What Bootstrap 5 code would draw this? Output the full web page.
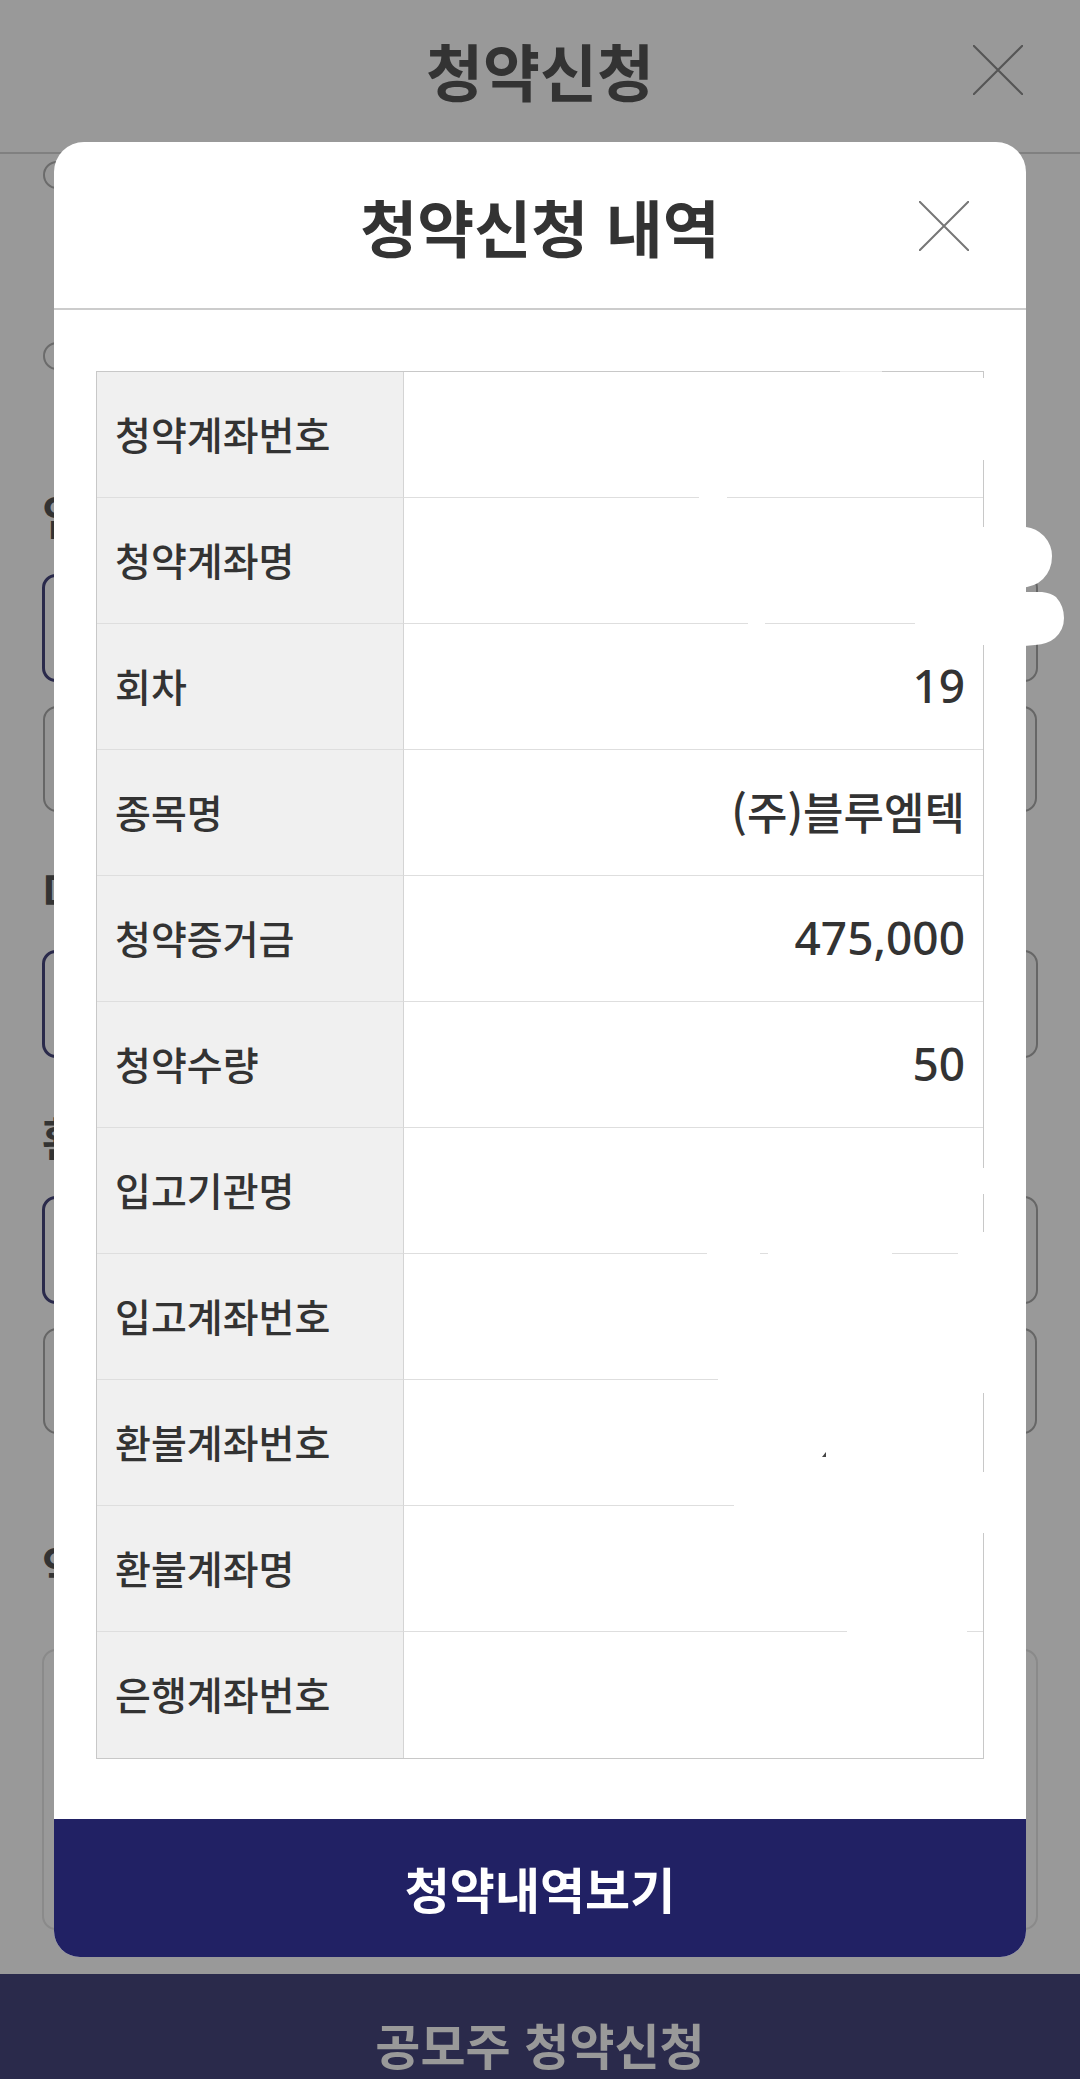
<!DOCTYPE html>
<html lang="ko">
<head>
<meta charset="utf-8">
<meta name="viewport" content="width=device-width, initial-scale=1">
<title>청약신청</title>
<link href="https://cdn.jsdelivr.net/npm/bootstrap@5.3.0/dist/css/bootstrap.min.css" rel="stylesheet">
<style>
  body { font-family: "Noto Sans CJK KR", sans-serif; color: #333; background: #999; }
  .page-shell { min-height: 100vh; }
  .top-bar { height: 154px; border-bottom: 2px solid #808080; padding-bottom: 12px; }
  .bar-title { font-size: 62px; line-height: 88px; font-weight: 700; }
  .close-x { right: 57px; width: 50px; height: 50px; }
  .close-x svg { display: block; width: 50px; height: 50px; stroke: #555; stroke-width: 2; fill: none; }
  .page-form { padding: 7px 42px 0; }
  .pick { appearance: none; display: block; width: 28px; height: 28px; margin: 0 0 153px 1px; border: 2px solid #6b6b6b; border-radius: 50%; }
  .pick-last { margin-bottom: 114px; }
  .group-title { font-size: 46px; line-height: 60px; font-weight: 700; margin: 0 0 30px; }
  .field-block { margin-bottom: 48px; }
  .field { background: #959595; border: 2px solid #666; border-radius: 14px; height: 108px; min-width: 0; }
  .field-on { background: #999; border: 3px solid #2a2a4b; }
  .field-wide { height: 106px; margin: 24px 1px 0; width: calc(100% - 2px); }
  .terms-block { margin-top: 100px; }
  .terms-box { height: 281px; margin-top: 55px; margin-bottom: 44px; border: 2px solid #8a8a8a; border-radius: 14px; background: transparent; resize: none; }
  .wide-btn { border: 0; font-size: 49px; line-height: 70px; font-weight: 700; }
  .apply-btn { background: #2a2a4b; color: #999; padding: 35px 0 0; }
  .sheet { top: 142px; left: 5%; right: 5%; background: #fff; border-radius: 30px 30px 26px 26px; }
  .sheet-head { height: 168px; border-bottom: 2px solid #ccc; padding-top: 2px; }
  .sheet-head svg { stroke: #777; }
  .sheet-body { padding: 61px 42px 60px; }
  .detail { border: 1px solid #c8c8c8; table-layout: fixed; border-collapse: separate; border-spacing: 0; }
  .detail th, .detail td { height: 126px; padding: 0 18px 4px; vertical-align: middle; border-bottom: 1px solid #dedede; }
  .detail tr:last-child > * { border-bottom: 0; }
  .detail th { width: 307px; font-size: 39px; line-height: 56px; font-weight: 500; background: #f0f0f0; border-right: 1px solid #d4d4d4; }
  .detail td { font-size: 44px; line-height: 60px; font-weight: 500; text-align: right; }
  .detail .figure-text { font-family: "Noto Sans", "Noto Sans CJK KR", sans-serif; font-size: 46px; }
  .view-btn { background: #212164; color: #fff; padding: 34px 0; border-radius: 0 0 26px 26px; }
  .marker { top: 0; left: 0; width: 1010px; height: 1815px; pointer-events: none; }
</style>
</head>
<body>
<div class="page-shell position-relative vh-100 overflow-hidden d-flex flex-column">
  <header class="top-bar position-relative d-flex align-items-center justify-content-center flex-shrink-0">
    <h1 class="bar-title m-0">청약신청</h1>
    <button type="button" class="close-x btn p-0 border-0 position-absolute" aria-labelledby="x1"><svg id="x1" viewBox="0 0 50 50"><path d="M0 0L50 50M50 0L0 50"/></svg></button>
  </header>
  <form class="page-form flex-shrink-0">
    <input class="pick" type="radio" name="kind" aria-labelledby="g1">
    <input class="pick pick-last" type="radio" name="kind" aria-labelledby="g1">
    <div class="field-block">
      <h2 class="group-title" id="g1">입</h2>
      <div class="d-flex gap-4">
        <input class="field field-on flex-fill" type="text" aria-labelledby="g1">
        <input class="field flex-fill" type="text" aria-labelledby="g1">
      </div>
      <input class="field field-wide d-block" type="text" aria-labelledby="g1">
    </div>
    <div class="field-block">
      <h2 class="group-title" id="g2">미</h2>
      <div class="d-flex gap-4">
        <input class="field field-on flex-fill" type="text" aria-labelledby="g2">
        <input class="field flex-fill" type="text" aria-labelledby="g2">
      </div>
    </div>
    <div>
      <h2 class="group-title" id="g3">환</h2>
      <div class="d-flex gap-4">
        <input class="field field-on flex-fill" type="text" aria-labelledby="g3">
        <input class="field flex-fill" type="text" aria-labelledby="g3">
      </div>
      <input class="field field-wide d-block" type="text" aria-labelledby="g3">
    </div>
    <div class="terms-block">
      <h2 class="group-title m-0" id="g4">약</h2>
      <textarea class="terms-box d-block w-100" aria-labelledby="g4"></textarea>
    </div>
  </form>
  <button type="button" class="wide-btn apply-btn w-100 flex-fill">공모주 청약신청</button>

  <section class="sheet position-absolute" role="dialog" aria-labelledby="sheetTitle">
    <div class="sheet-head position-relative d-flex align-items-center justify-content-center">
      <h2 class="bar-title m-0" id="sheetTitle">청약신청 내역</h2>
      <button type="button" class="close-x btn p-0 border-0 position-absolute" aria-labelledby="x2"><svg id="x2" viewBox="0 0 50 50"><path d="M0 0L50 50M50 0L0 50"/></svg></button>
    </div>
    <div class="sheet-body">
      <table class="detail w-100">
        <tbody>
          <tr><th scope="row">청약계좌번호</th><td></td></tr>
          <tr><th scope="row">청약계좌명</th><td></td></tr>
          <tr><th scope="row">회차</th><td class="figure-text">19</td></tr>
          <tr><th scope="row">종목명</th><td>(주)블루엠텍</td></tr>
          <tr><th scope="row">청약증거금</th><td class="figure-text">475,000</td></tr>
          <tr><th scope="row">청약수량</th><td class="figure-text">50</td></tr>
          <tr><th scope="row">입고기관명</th><td></td></tr>
          <tr><th scope="row">입고계좌번호</th><td></td></tr>
          <tr><th scope="row">환불계좌번호</th><td></td></tr>
          <tr><th scope="row">환불계좌명</th><td></td></tr>
          <tr><th scope="row">은행계좌번호</th><td></td></tr>
        </tbody>
      </table>
    </div>
    <button type="button" class="wide-btn view-btn w-100 d-block">청약내역보기</button>
    
    <svg class="marker position-absolute" viewBox="0 0 1010 1815" fill="none" stroke="#fff" stroke-width="8">
      <path fill="#fff" stroke="none" d="M965 385h7q10 1 18 9q8 9 8 20q0 14-9 23q-8 8-23 9zM960 450h28q9 1 14 5q8 9 8 21q0 12-9 20q-7 6-20 7l-21 2z"/>
      <path stroke-opacity=".6" d="M786 229h42"/>
      <path d="M645 355h28M694 481h17M861 481h71M653 1111h53M714 1111h124M904 1111h28M664 1237h268M680 1363h252M793 1489h120"/>
      <path d="M929 236v82M929 385v118M929 1026v26M929 1090v161M929 1330v61"/>
      <path fill="#444" stroke="none" d="M768 1315l4-5v5z"/>
    </svg>
  </section>
</div>
<script src="https://cdn.jsdelivr.net/npm/bootstrap@5.3.0/dist/js/bootstrap.bundle.min.js"></script>
</body>
</html>
